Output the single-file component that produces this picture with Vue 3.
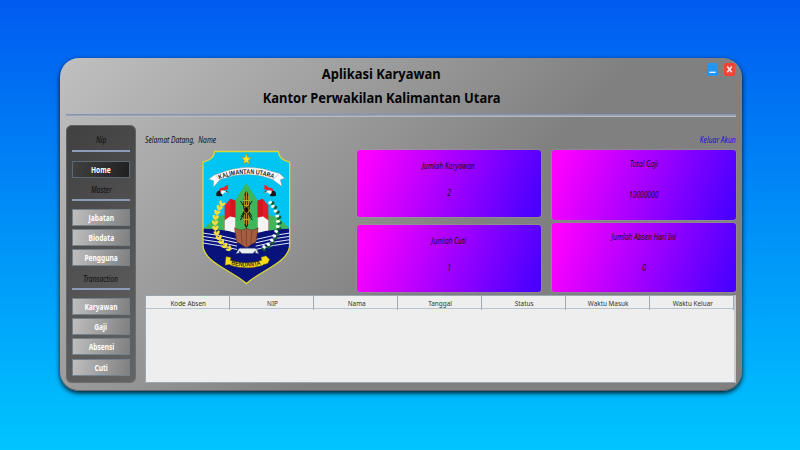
<script setup>
const menu = [
  { kind: 'title', label: 'Nip', top: 8 },
  { kind: 'rule', top: 3 },
  { kind: 'button', label: 'Home', top: 9, active: true },
  { kind: 'title', label: 'Master', top: 5 },
  { kind: 'rule', top: 2 },
  { kind: 'button', label: 'Jabatan', top: 8 },
  { kind: 'button', label: 'Biodata', top: 3 },
  { kind: 'button', label: 'Pengguna', top: 3 },
  { kind: 'title', label: 'Transaction', top: 6 },
  { kind: 'rule', top: 2 },
  { kind: 'button', label: 'Karyawan', top: 8 },
  { kind: 'button', label: 'Gaji', top: 3 },
  { kind: 'button', label: 'Absensi', top: 3 },
  { kind: 'button', label: 'Cuti', top: 4 },
]
const left = [
  { title: 'Jumlah Karyawan', value: '2' },
  { title: 'Jumlah Cuti', value: '1' },
]
const right = [
  { title: 'Total Gaji', value: '10000000' },
  { title: 'Jumlah Absen Hari Ini', value: '0' },
]
const columns = ['Kode Absen', 'NIP', 'Nama', 'Tanggal', 'Status', 'Waktu Masuk', 'Waktu Keluar']
const waves = [278, 288, 298, 308]
const grains = [[98, 172, 30], [90, 184, 20], [83, 198, 15], [78, 213, 8], [76, 229, 0], [77, 245, -8], [81, 260, -14], [87, 274, -20], [94, 287, -30], [104, 299, -40], [116, 308, -50]]
const cotton = [[244, 172, -30], [252, 184, -20], [260, 198, -15], [265, 213, -8], [267, 229, 0], [266, 245, 8], [261, 260, 14], [255, 274, 20], [247, 287, 30], [236, 299, 40], [223, 307, 50]]
</script>

<template>
  <main class="desktop">
    <section class="window">
      <header class="header">
        <div class="controls">
          <button class="ctl min"><svg viewBox="0 0 10 12"><path d="M2.2 8.6h5.6" stroke="#e6f3ff" stroke-width="1.3" /></svg></button>
          <button class="ctl close"><svg viewBox="0 0 10 12"><path d="M2.9 3.2l4.2 5.4M7.1 3.2l-4.2 5.4" stroke="#ffe4e0" stroke-width="1.5" /></svg></button>
        </div>
        <h1><span>Aplikasi Karyawan</span></h1>
        <h1><span>Kantor Perwakilan Kalimantan Utara</span></h1>
      </header>
      <div class="divider"></div>
      <div class="body">
        <nav class="sidebar">
          <template v-for="(m, i) in menu" :key="i">
            <div v-if="m.kind === 'title'" class="group" :style="{ marginTop: m.top + 'px' }"><span class="slim">{{ m.label }}</span></div>
            <div v-else-if="m.kind === 'rule'" class="rule" :style="{ marginTop: m.top + 'px' }"></div>
            <button v-else class="item" :class="{ active: m.active }" :style="{ marginTop: m.top + 'px' }"><span class="slim">{{ m.label }}</span></button>
          </template>
        </nav>
        <div class="content">
          <div class="greet">
            <span class="slim from-left">Selamat Datang,&nbsp; Name</span>
            <a class="slim from-right">Keluar Akun</a>
          </div>
          <div class="overview">
            <svg class="crest" viewBox="37 14 267 404">
              <defs>
                <clipPath id="shield">
                  <path d="M75 18H266Q268 43 300 50V298C300 350 215 374 170 414C125 374 40 350 40 298V50Q72 43 75 18Z" />
                </clipPath>
                <path id="arc1" d="M89 102Q170 69 253 100" />
                <path id="arc2" d="M124 356Q172 371 220 355" />
              </defs>
              <g clip-path="url(#shield)">
                <path d="M30 10H310V420H30Z" fill="#00c4f2" />
                <path d="M40 252L76 216L110 206L170 112L230 206L266 216L302 252V275H40Z" fill="#3fb65a" />
                <path d="M105 180L122 160L137 166V262H105ZM204 166L219 160L236 180V262H204Z" fill="#e61b29" />
                <path d="M105 224L122 212L137 216V262H105ZM204 216L219 212L236 224V262H204Z" fill="#f4f4f4" />
                <path d="M122 160L137 166V216L122 212ZM219 160L204 166V216L219 212Z" fill="#cf1722" />
                <path d="M30 250Q100 250 135 262H206Q250 250 310 250V420H30Z" fill="#07127a" />
                <path v-for="y in waves" :key="y" :d="`M36 ${y - 10}Q88 ${y - 4} 142 ${y + 10}M304 ${y - 10}Q252 ${y - 4} 198 ${y + 10}`" transform="translate(0 -6)" fill="none" stroke="#dfe6fb" stroke-width="3" />
              </g>
              <path d="M135 247Q153 260 170 248Q187 260 205 247L199 290Q187 294 170 307Q153 294 141 290Z" fill="#a65e42" stroke="#643421" stroke-width="2" />
              <path d="M170 246V304M154 256L158 294M187 256L183 294" stroke="#6d3925" stroke-width="2" />
              <ellipse cx="170" cy="192" rx="10" ry="54" fill="#231d08" />
              <path d="M170 140V240M164 150V235M176 150V235M160 165H180M158 180H182M158 195H182M160 222H180" stroke="#c6a328" stroke-width="3" />
              <path d="M153 167L188 224M187 167L152 224M154 214L162 200M187 214L179 200" stroke="#161306" stroke-width="3" />
              <ellipse cx="170" cy="193" rx="8" ry="10" fill="#171207" stroke="#d7ac24" stroke-width="2" />
              <path d="M98 172C72 200 68 260 92 286Q106 304 126 311" fill="none" stroke="#e0c728" stroke-width="4" />
              <g v-for="(g, i) in grains" :key="'g' + i" :transform="`translate(${g[0]} ${g[1]}) rotate(${g[2]})`">
                <ellipse cx="-5" cy="0" rx="4" ry="7.5" fill="#f4de45" transform="rotate(-30)" />
                <ellipse cx="5" cy="0" rx="4" ry="7.5" fill="#f4de45" transform="rotate(30)" />
              </g>
              <path d="M244 172C271 200 274 260 250 286Q236 304 215 311" fill="none" stroke="#165b3b" stroke-width="4" />
              <g v-for="(g, i) in cotton" :key="'c' + i" :transform="`translate(${g[0]} ${g[1]}) rotate(${g[2]})`">
                <ellipse cx="4" cy="3" rx="6" ry="5" fill="#135b3c" />
                <ellipse cx="-2" cy="-2" rx="6" ry="4.5" fill="#f5fbf5" />
              </g>
              <path d="M139 325L146 312L150 308H196L201 312L207 325L197 322V316L190 324H156L149 316V322Z" fill="#e8eef1" stroke="#4d5975" stroke-width="1.5" />
              <path d="M109 333L124 336L122 345Q170 360 216 344L214 335L229 331L240 342L234 354L222 357L218 360Q170 374 124 360L120 357L106 359Z" fill="#f8dc18" stroke="#5d5616" stroke-width="1.5" />
              <text font-size="19" font-weight="700" fill="#322b0c"><textPath href="#arc2" textLength="91" lengthAdjust="spacingAndGlyphs">BENUANTA</textPath></text>
              <path d="M57 101L76 87L86 85Q170 48 255 80L269 83L285 98L272 103L277 123L250 103L247 101Q170 72 91 103L71 125L72 106Z" fill="#fff" stroke="#85979d" stroke-width="1.5" />
              <path d="M76 87L91 103M269 83L250 103" stroke="#93a2a8" stroke-width="2" />
              <text font-size="20" font-weight="700" fill="#17171a"><textPath href="#arc1" textLength="166" lengthAdjust="spacingAndGlyphs">KALIMANTAN UTARA</textPath></text>
              <path d="M170 24L174 36L184 36L176 44L179 56L170 49L161 56L164 44L156 36L166 36Z" fill="#ffe52b" stroke="#a7831c" stroke-width="1.5" />
              <g id="bird">
                <path d="M87 136Q90 125 103 126Q106 118 117 119Q111 125 117 128L109 135Q98 132 91 141Z" fill="#e8252c" />
                <path d="M93 136Q106 132 119 141L104 141L97 149Z" fill="#fff" />
                <path d="M80 143Q83 134 91 136L94 147L90 153L80 151Z" fill="#181820" />
                <path d="M93 144L99 148L96 153L90 151ZM107 135L120 141L110 140Z" fill="#181820" />
              </g>
              <use href="#bird" transform="translate(339 0) scale(-1 1)" />
              <path d="M75 18H266Q268 43 300 50V298C300 350 215 374 170 414C125 374 40 350 40 298V50Q72 43 75 18Z" fill="none" stroke="#dcd534" stroke-width="4" />
            </svg>
            <div class="stack loose">
              <article v-for="c in left" :key="c.title" class="card">
                <span class="slim">{{ c.title }}</span><span class="slim">{{ c.value }}</span>
              </article>
            </div>
            <div class="stack tight">
              <article v-for="c in right" :key="c.title" class="card">
                <span class="slim">{{ c.title }}</span><span class="slim">{{ c.value }}</span>
              </article>
            </div>
          </div>
          <div class="table">
            <div class="thead">
              <div v-for="c in columns" :key="c" class="th"><span class="slim">{{ c }}</span></div>
            </div>
          </div>
        </div>
      </div>
    </section>
  </main>
</template>

<style>
body { margin: 0; overflow: hidden; }
</style>

<style scoped>
* { box-sizing: border-box; }
.desktop {
  width: 800px; height: 450px; padding: 58px 58px 59px 60px;
  background: linear-gradient(180deg, #005bf0 0%, #00c5ff 100%);
  font-family: "Noto Sans", "Open Sans", sans-serif; color: #111;
}
.window {
  width: 682px; height: 333px; padding: 0 6px; border-radius: 19px;
  background: linear-gradient(135deg, #c0c0c0 0, #808080 410px);
  box-shadow: 0 2px 5px rgba(0, 0, 0, .9), inset 0 -1px 0 rgba(60, 60, 60, .5);
  display: flex; flex-direction: column;
}
.header { height: 56px; flex: none; position: relative; padding: 4px 39px 0 0; }
h1 { margin: 0; height: 24px; line-height: 24px; font-size: 14px; font-weight: 700; text-align: center; color: #050505; }
h1 span { display: inline-block; white-space: nowrap; transform: scaleX(.925); }
.slim { display: inline-block; white-space: nowrap; transform: scaleX(.84); }
.from-left { transform-origin: left; }
.from-right { transform-origin: right; }
.controls { position: absolute; right: 1px; top: 5px; display: flex; gap: 6px; }
.ctl { width: 11px; height: 13px; padding: 0; border: 0; border-radius: 2px; }
.ctl svg { display: block; width: 11px; height: 13px; }
.min { background: #2196f3; }
.close { background: #f44336; }
.divider { height: 3px; flex: none; border-top: 1px solid #8793b3; border-bottom: 1px solid #b7bac2; background: #9ba2b4; }
.body { display: flex; gap: 9px; padding-top: 8px; }
.sidebar {
  width: 70px; height: 258px; padding: 0 6px; border-radius: 6px;
  background: linear-gradient(135deg, #404040, #646464);
  box-shadow: inset 0 0 0 1px rgba(120, 120, 120, .55);
  display: flex; flex-direction: column; flex: none;
}
.group { height: 14px; line-height: 14px; font-size: 8px; font-style: italic; text-align: center; color: #0b0b0b; }
.rule { height: 2px; flex: none; background: #8c9bb6; }
.item {
  height: 17px; flex: none; padding: 0; border: 1px solid #74818d;
  background: linear-gradient(100deg, #bebebe, #808080);
  color: #fff; font: 700 8px/14px "Noto Sans", "Open Sans", sans-serif; text-align: center;
}
.item .slim { transform: scaleX(.83); }
.item.active { background: linear-gradient(100deg, #404040, #202020); border-color: #5b6875; }
.content { width: 591px; display: flex; flex-direction: column; flex: none; }
.greet { height: 25px; padding-top: 8px; display: flex; justify-content: space-between; font-size: 8px; line-height: 14px; font-style: italic; }
.greet a { color: #1a0ae0; }
.overview { display: flex; height: 142px; }
.crest { width: 89px; height: 135px; margin-left: 57px; flex: none; font-family: "Liberation Sans", sans-serif; }
.stack { display: flex; flex-direction: column; width: 184.5px; }
.loose { margin-left: 65.5px; gap: 8px; }
.loose .card { height: 67px; }
.tight { margin-left: 10.5px; gap: 3px; }
.tight .card { height: 70px; }
.card {
  border-radius: 3px; background: linear-gradient(110deg, #ff00ff 4%, #4a00ff 96%);
  box-shadow: 0 0 0 .5px rgba(180, 160, 200, .5);
  display: flex; flex-direction: column; align-items: center; padding-top: 9px; gap: 13px;
  font-size: 8px; line-height: 14px; font-style: italic;
}
.tight .card { padding-top: 7px; gap: 17px; }
.table { height: 88px; margin-top: 3px; background: #eee; border: 1px solid #9aa7b3; border-right: 2px solid #c4cbd2; }
.thead { display: grid; grid-template-columns: repeat(7, 1fr); height: 13px; border-bottom: 1px solid #b8c4ce; }
.th { font-size: 7.6px; line-height: 14px; padding-left: 2px; text-align: center; color: #333; border-right: 1px solid #9fabb6; }
</style>
